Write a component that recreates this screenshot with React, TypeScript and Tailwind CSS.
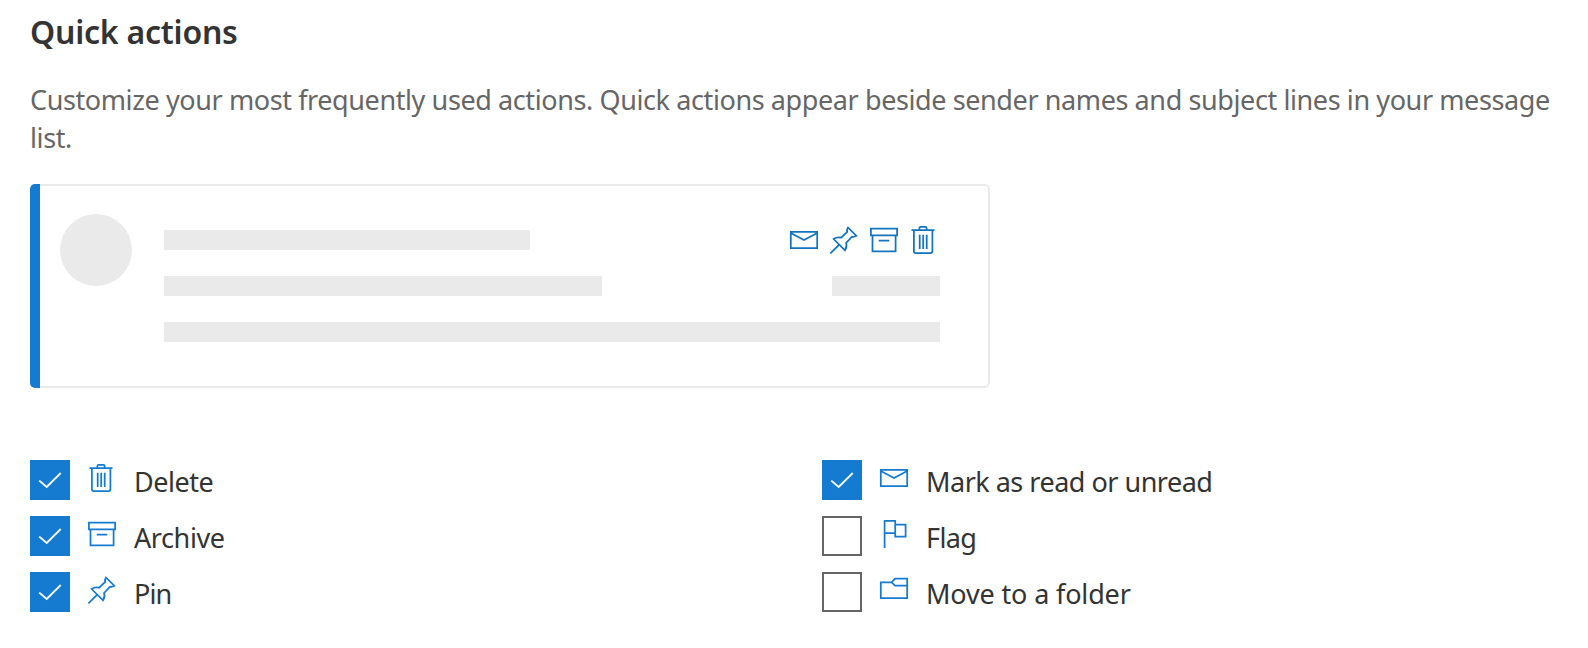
import type { ReactNode } from "react";

function Icon({ children }: { children: ReactNode }) {
  return (
    <svg
      viewBox="0 0 28 28"
      className="size-7 shrink-0 overflow-visible"
      fill="none"
      stroke="currentColor"
      strokeWidth="1.75"
    >
      {children}
    </svg>
  );
}

function TrashIcon() {
  return (
    <Icon>
      <path d="M1.5 4.2H24.5M9.4 4.2V1.9Q9.4.8 10.5.8H15.5Q16.6.8 16.6 1.9V4.2" />
      <path d="M3.9 4.2V25.2Q3.9 27.1 5.8 27.1H20.5Q22.4 27.1 22.4 25.2V4.2" />
      <path d="M9.7 8.7V23M13.2 8.7V23M16.7 8.7V23" />
    </Icon>
  );
}

function ArchiveIcon() {
  return (
    <Icon>
      <path d="M.9 2.5H27.1V9.4H.9ZM2.5 9.4V25.3H25.6V9.4M8.7 14.6H19.3" />
    </Icon>
  );
}

function PinIcon() {
  return (
    <Icon>
      <path d="M.4 27.3L9.2 18.6M3.6 13Q7.2 10.6 11 11.7L17.2 6Q16.6 3.6 18 1.5L26.4 9.9Q24.4 11.3 22 10.7L16.1 17Q17.3 20.6 15 24.3Z" />
    </Icon>
  );
}

function MailIcon() {
  return (
    <Icon>
      <path d="M.8 5.8H27.2V22.2H.8ZM.8 7L14 14L27.2 7" />
    </Icon>
  );
}

function FlagIcon() {
  return (
    <Icon>
      <path d="M4.6 28V.8H15.2V13H4.6M15.2 4.5H25.6V16.6H15.2V13" />
    </Icon>
  );
}

function FolderIcon() {
  return (
    <Icon>
      <path d="M.8 6.3H11.6L15 2.6H27.2V22.1H.8ZM11.6 6.3L15 9.6H27.2" />
    </Icon>
  );
}

type Action = {
  label: string;
  icon: ReactNode;
  checked: boolean;
  tracking: string;
};

const columns: Action[][] = [
  [
    { label: "Delete", icon: <TrashIcon />, checked: true, tracking: "tracking-[-0.5px]" },
    { label: "Archive", icon: <ArchiveIcon />, checked: true, tracking: "tracking-[-0.4px]" },
    { label: "Pin", icon: <PinIcon />, checked: true, tracking: "tracking-[-0.9px]" },
  ],
  [
    { label: "Mark as read or unread", icon: <MailIcon />, checked: true, tracking: "tracking-[-0.5px]" },
    { label: "Flag", icon: <FlagIcon />, checked: false, tracking: "tracking-[-0.6px]" },
    { label: "Move to a folder", icon: <FolderIcon />, checked: false, tracking: "tracking-[-0.15px]" },
  ],
];

function ActionRow({ action }: { action: Action }) {
  return (
    <label className="flex h-10 items-center">
      <input type="checkbox" className="sr-only" defaultChecked={action.checked} />
      {action.checked ? (
        <span className="size-10 shrink-0 bg-[#157bd1]">
          <svg viewBox="0 0 40 40" className="size-10" fill="none" stroke="#fff" strokeWidth="1.8">
            <path d="M9.3 20.6L16.7 27L30.7 13" />
          </svg>
        </span>
      ) : (
        <span className="size-10 shrink-0 border-2 border-[#666]" />
      )}
      <span className="mr-[18px] mb-1 ml-[18px] text-[#157bd1]">{action.icon}</span>
      <span className={`mt-1 text-[27px] leading-9 whitespace-nowrap text-[#333] ${action.tracking}`}>
        {action.label}
      </span>
    </label>
  );
}

export default function App() {
  return (
    <main className="h-[648px] w-[1588px] overflow-hidden bg-white px-[30px] pt-2.5 font-['Noto_Sans',sans-serif]">
      <h1 className="h-11 text-[32px] leading-11 font-semibold tracking-[-0.23px] whitespace-nowrap text-[#333]">
        Quick actions
      </h1>
      <p className="mt-[27px] h-[75px] text-[27px] leading-[37.5px] tracking-[-0.4px] whitespace-nowrap text-[#666]">
        Customize your most frequently used actions. Quick actions appear beside sender names and subject lines in your message
        <br />
        list.
      </p>

      {/* Message preview */}
      <section className="mt-7 flex h-[204px] w-[960px] overflow-hidden rounded-[5px]">
        <div className="w-2.5 bg-[#157bd1]" />
        <div className="flex flex-1 rounded-r-[5px] border-y-2 border-r-2 border-[#eaeaea] pt-7 pr-12 pl-5">
          <div className="size-[72px] rounded-full bg-[#eaeaea]" />
          <div className="ml-8 flex flex-1 flex-col pt-3">
            <div className="flex h-7 justify-between">
              <div className="mt-1 h-5 w-[366px] bg-[#eaeaea]" />
              <div className="mr-0.5 flex gap-3 text-[#1274bf]">
                <MailIcon />
                <PinIcon />
                <ArchiveIcon />
                <TrashIcon />
              </div>
            </div>
            <div className="mt-[22px] flex h-5 justify-between">
              <div className="w-[438px] bg-[#eaeaea]" />
              <div className="w-[108px] bg-[#eaeaea]" />
            </div>
            <div className="mt-[26px] h-5 bg-[#eaeaea]" />
          </div>
        </div>
      </section>

      <section className="mt-[72px] flex">
        {columns.map((actions) => (
          <div key={actions[0].label} className="flex w-[792px] shrink-0 flex-col gap-4">
            {actions.map((action) => (
              <ActionRow key={action.label} action={action} />
            ))}
          </div>
        ))}
      </section>
    </main>
  );
}
